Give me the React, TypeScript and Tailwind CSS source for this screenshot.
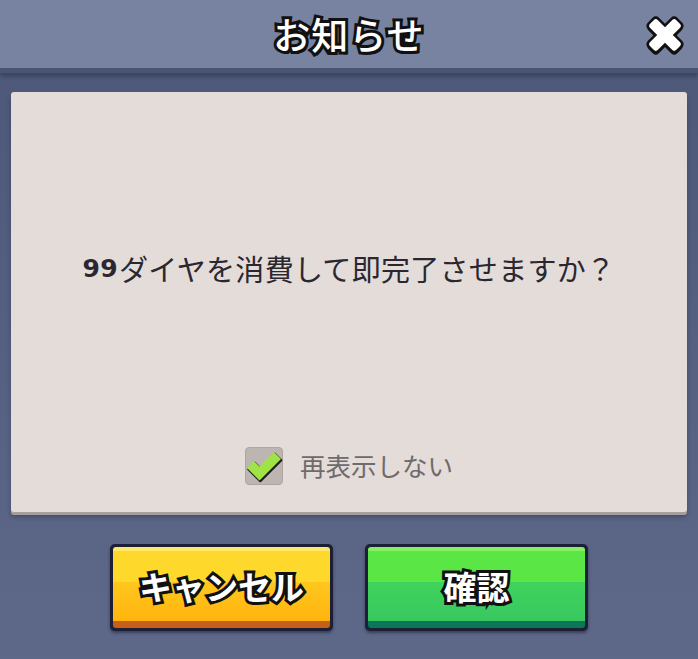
import React from "react";

const outlined =
  "[font-family:'Noto_Sans_CJK_JP',sans-serif] text-white [paint-order:stroke_fill]";

function CloseX() {
  return (
    <svg width="48" height="46" viewBox="0 0 48 46" className="absolute right-[9px] top-[12px]">
      <g transform="translate(24 23) rotate(45)">
        <g transform="translate(1.5 1.5)">
          <rect x="-20" y="-7" width="40" height="14" rx="4" fill="#111" />
          <rect x="-7" y="-20" width="14" height="40" rx="4" fill="#111" />
        </g>
        <rect x="-21" y="-8" width="42" height="16" rx="4.5" fill="#111" />
        <rect x="-8" y="-21" width="16" height="42" rx="4.5" fill="#111" />
        <rect x="-18.5" y="-5.5" width="37" height="11" rx="3" fill="#fff" />
        <rect x="-5.5" y="-18.5" width="11" height="37" rx="3" fill="#fff" />
      </g>
    </svg>
  );
}

function Check() {
  const d = "M3 21 L9 15 L14.5 20.5 L29 6 L35 12 L14.5 32.5 Z";
  return (
    <svg width="38" height="38" viewBox="0 0 38 38" className="absolute -left-px -top-px">
      <path d={d} fill="#1e1e1e" stroke="#1e1e1e" strokeWidth="3" strokeLinejoin="round" transform="translate(0.8 1.2)" />
      <path d={d} fill="#9fe347" stroke="#9fe347" strokeWidth="1.5" strokeLinejoin="round" />
    </svg>
  );
}

export default function App() {
  return (
    <div className="w-[698px] h-[659px] overflow-hidden flex flex-col bg-gradient-to-b from-[#4c5676] to-[#5e6889]">
      <div className="relative h-[68px] shrink-0 bg-[#7883a1] flex items-center justify-center">
        <span
          className={`${outlined} font-medium text-[37px] leading-none [-webkit-text-stroke:6px_#111] [text-shadow:2px_3px_0_#111] tracking-[1px]`}
        >
          お知らせ
        </span>
        <CloseX />
      </div>
      <div className="h-[5px] shrink-0 bg-[#4a5473] shadow-[0_3px_4px_rgba(40,46,70,0.6)]" />
      <div className="px-[11px] pt-[19px]">
        <div className="h-[420px] rounded-[3px] bg-[#e3dcd9] shadow-[0_3px_0_#a69e9a,0_5px_4px_rgba(40,44,70,0.45)] flex flex-col items-center">
          <div className="mt-[155px] h-[42px] flex items-center text-[#2b2730] text-[29px] leading-none [font-family:'Noto_Sans_CJK_JP',sans-serif] tracking-[0.3px]">
            <span className="font-bold text-[25px] [font-family:'DejaVu_Sans',sans-serif] mr-[1px]">99</span>
            <span>ダイヤを消費して即完了させますか？</span>
          </div>
          <div className="mt-[158px] flex items-center gap-[17px]">
            <div className="relative w-[38px] h-[38px] rounded-[4px] bg-[#bdb5b1] border border-[#aea6a2]">
              <Check />
            </div>
            <span className="text-[25.5px] leading-none text-[#6f6a6b] [font-family:'Noto_Sans_CJK_JP',sans-serif] pb-[2px]">
              再表示しない
            </span>
          </div>
        </div>
      </div>
      <div className="mt-[32px] flex justify-center gap-[32px]">
        <button className="relative w-[223px] h-[87px] rounded-[5px] bg-[#1c2036] p-[3px] shadow-[0_2px_3px_rgba(20,24,40,0.5)]">
          <div className="h-full w-full rounded-[3px] overflow-hidden flex flex-col">
            <div className="h-[4px] bg-[#ffe76a]" />
            <div className="h-[31px] bg-[#ffd82c]" />
            <div className="flex-1 bg-gradient-to-b from-[#ffc81e] to-[#ffb40c]" />
            <div className="h-[7px] bg-[#c65f1a]" />
          </div>
          <span
            className={`${outlined} font-bold absolute inset-0 flex items-center justify-center pb-[3px] text-[33px] leading-none [-webkit-text-stroke:6px_#111] [text-shadow:1px_2px_0_#111]`}
          >
            キャンセル
          </span>
        </button>
        <button className="relative w-[223px] h-[87px] rounded-[5px] bg-[#1c2036] p-[3px] shadow-[0_2px_3px_rgba(20,24,40,0.5)]">
          <div className="h-full w-full rounded-[3px] overflow-hidden flex flex-col">
            <div className="h-[4px] bg-[#86f062]" />
            <div className="h-[31px] bg-[#5ae645]" />
            <div className="flex-1 bg-gradient-to-b from-[#40d35c] to-[#38c860]" />
            <div className="h-[7px] bg-[#0b7658]" />
          </div>
          <span
            className={`${outlined} font-bold absolute inset-0 flex items-center justify-center pb-[3px] text-[33px] leading-none [-webkit-text-stroke:6px_#111] [text-shadow:1px_2px_0_#111]`}
          >
            確認
          </span>
        </button>
      </div>
    </div>
  );
}
